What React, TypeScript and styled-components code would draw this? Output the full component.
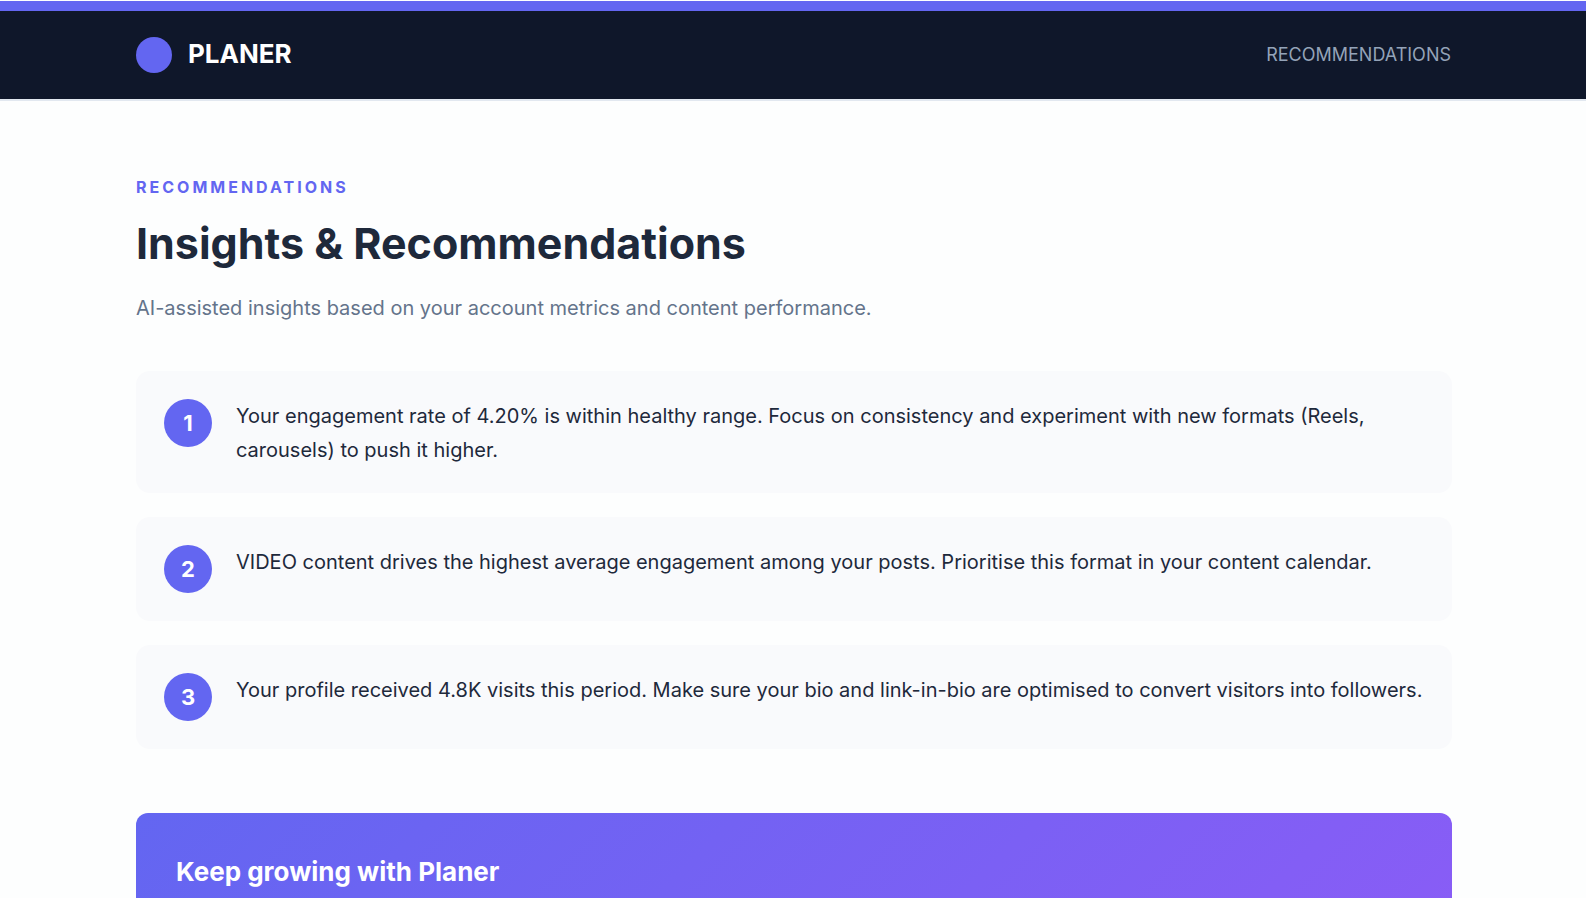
import React from "react";
import styled, { createGlobalStyle } from "styled-components";

const GlobalStyle = createGlobalStyle`
  *, *::before, *::after { box-sizing: border-box; }
  html { background: #fdfefe; }
  body {
    margin: 0;
    font-family: Inter, "Liberation Sans", sans-serif;
    color: #1e293b;
    overflow: hidden;
  }
  h1, h2, p, ol { margin: 0; padding: 0; }
`;

const Page = styled.div`
  display: flex;
  flex-direction: column;
  height: 100vh;
  overflow: hidden;
  padding-top: 1px;
`;

const AccentBar = styled.div`
  flex: none;
  height: 10px;
  background: #6366f1;
`;

const Header = styled.header`
  flex: none;
  display: flex;
  align-items: center;
  justify-content: space-between;
  height: 90px;
  padding: 0 135px 0 136px;
  background: #0f172a;
  border-bottom: 2px solid #e2e8f0;
`;

const Brand = styled.div`
  display: flex;
  align-items: center;
  gap: 16px;
`;

const BrandDot = styled.span`
  width: 36px;
  height: 36px;
  border-radius: 50%;
  background: #6366f1;
`;

const BrandName = styled.span`
  font-size: 26px;
  line-height: 32px;
  padding-bottom: 2px;
  font-weight: 700;
  color: #ffffff;
`;

const SectionLabel = styled.span`
  font-size: 18px;
  line-height: 22px;
  color: #94a3b8;
`;

const Main = styled.main`
  padding: 76px 134px 0 136px;
`;

const Eyebrow = styled.p`
  font-size: 16px;
  line-height: 20px;
  font-weight: 700;
  letter-spacing: 3px;
  color: #6366f1;
`;

const Title = styled.h1`
  margin-top: 20px;
  font-size: 43px;
  line-height: 52px;
  font-weight: 700;
`;

const Intro = styled.p`
  margin-top: 22px;
  font-size: 20px;
  line-height: 34px;
  color: #64748b;
`;

const InsightList = styled.ol`
  display: flex;
  flex-direction: column;
  gap: 24px;
  margin-top: 46px;
  list-style: none;
`;

const Insight = styled.li`
  display: flex;
  align-items: flex-start;
  gap: 24px;
  min-height: 104px;
  padding: 28px 28px 26px;
  border-radius: 14px;
  background: #f9fafc;
`;

const InsightNumber = styled.span`
  flex: none;
  display: grid;
  place-items: center;
  width: 48px;
  height: 48px;
  border-radius: 50%;
  background: #6366f1;
  color: #ffffff;
  font-size: 22px;
  line-height: 28px;
  font-weight: 700;
`;

const InsightText = styled.p`
  font-size: 20px;
  line-height: 34px;
`;

const CallToAction = styled.section`
  margin-top: 64px;
  height: 200px;
  padding: 40px;
  border-radius: 12px;
  background: linear-gradient(135deg, #6366f1, #8b5cf6);
`;

const CallToActionTitle = styled.h2`
  font-size: 26px;
  line-height: 38px;
  font-weight: 700;
  color: #ffffff;
`;

const insights = [
  "Your engagement rate of 4.20% is within healthy range. Focus on consistency and experiment with new formats (Reels, carousels) to push it higher.",
  "VIDEO content drives the highest average engagement among your posts. Prioritise this format in your content calendar.",
  "Your profile received 4.8K visits this period. Make sure your bio and link-in-bio are optimised to convert visitors into followers.",
];

export default function App() {
  return (
    <Page>
      <GlobalStyle />
      <AccentBar />
      <Header>
        <Brand>
          <BrandDot />
          <BrandName>PLANER</BrandName>
        </Brand>
        <SectionLabel>RECOMMENDATIONS</SectionLabel>
      </Header>
      <Main>
        <Eyebrow>RECOMMENDATIONS</Eyebrow>
        <Title>Insights &amp; Recommendations</Title>
        <Intro>AI-assisted insights based on your account metrics and content performance.</Intro>
        <InsightList>
          {insights.map((text, index) => (
            <Insight key={text}>
              <InsightNumber>{index + 1}</InsightNumber>
              <InsightText>{text}</InsightText>
            </Insight>
          ))}
        </InsightList>
        <CallToAction>
          <CallToActionTitle>Keep growing with Planer</CallToActionTitle>
        </CallToAction>
      </Main>
    </Page>
  );
}
